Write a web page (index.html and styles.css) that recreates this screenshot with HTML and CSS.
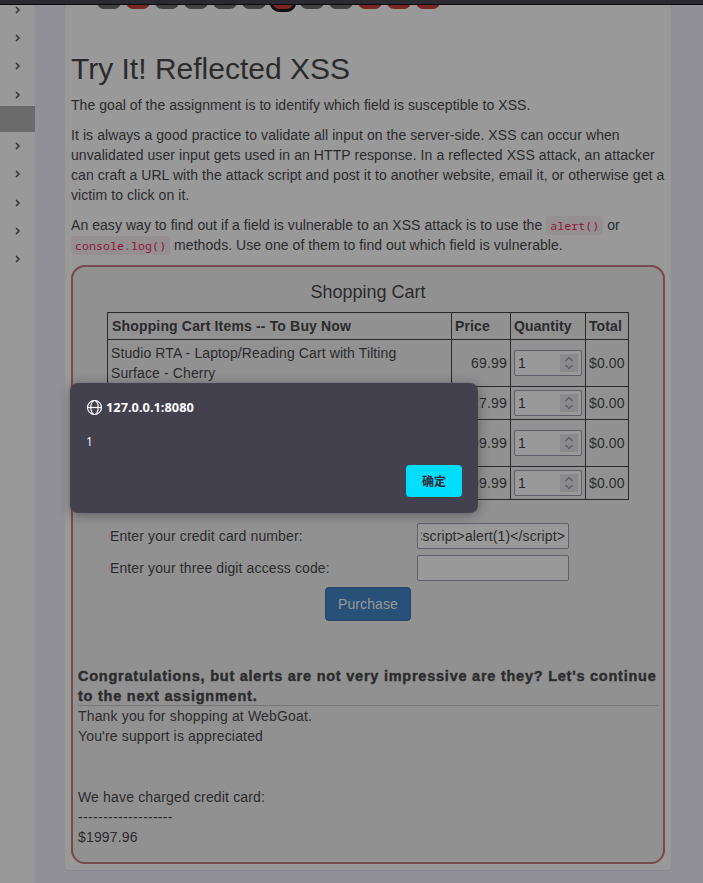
FILE: index.html
```html
<!DOCTYPE html>
<html lang="en">
<head>
<meta charset="utf-8">
<title>WebGoat</title>
<link rel="stylesheet" href="styles.css">
</head>
<body>
<svg width="0" height="0" class="defs">
  <symbol id="chev" viewBox="0 0 6 8"><path d="M1 1l3 3-3 3" fill="none" stroke="#33333d" stroke-width="1.5"/></symbol>
  <symbol id="spin" viewBox="0 0 18 18"><path d="M5.500 7L9 3.500l3.500 3.500M5.500 11L9 14.500l3.500-3.500" fill="none" stroke="#5e5d68" stroke-width="1.500"/></symbol>
</svg>
<div class="topbar"></div>
<div class="layout">
  <nav class="sidebar">
    <div class="item"><svg><use href="#chev"/></svg></div>
    <div class="item"><svg><use href="#chev"/></svg></div>
    <div class="item"><svg><use href="#chev"/></svg></div>
    <div class="item"><svg><use href="#chev"/></svg></div>
    <div class="item selected"></div>
    <div class="item"><svg><use href="#chev"/></svg></div>
    <div class="item"><svg><use href="#chev"/></svg></div>
    <div class="item"><svg><use href="#chev"/></svg></div>
    <div class="item"><svg><use href="#chev"/></svg></div>
    <div class="item"><svg><use href="#chev"/></svg></div>
  </nav>
  <main class="card">
    <div class="pages"><i></i><i class="red"></i><i></i><i></i><i></i><i></i><i class="red current"></i><i></i><i></i><i class="red"></i><i class="red"></i><i class="red"></i></div>
    <h1>Try It! Reflected XSS</h1>
    <p>The goal of the assignment is to identify which field is susceptible to XSS.</p>
    <p class="about">It is always a good practice to validate all input on the server-side. XSS can occur when<br>unvalidated user input gets used in an HTTP response. In a reflected XSS attack, an attacker<br>can craft a URL with the attack script and post it to another website, email it, or otherwise get a<br>victim to click on it.</p>
    <p>An easy way to find out if a field is vulnerable to an XSS attack is to use the <code>alert()</code> or<br><code>console.log()</code> methods. Use one of them to find out which field is vulnerable.</p>
    <section class="attack">
      <h4>Shopping Cart</h4>
      <table class="cart">
        <colgroup><col class="c1"><col class="c2"><col class="c3"><col class="c4"></colgroup>
        <tr class="head"><th>Shopping Cart Items -- To Buy Now</th><th>Price</th><th>Quantity</th><th>Total</th></tr>
        <tr class="tall"><td>Studio RTA - Laptop/Reading Cart with Tilting<br>Surface - Cherry</td><td class="num">69.99</td><td><div class="qty">1<svg><use href="#spin"/></svg></div></td><td>$0.00</td></tr>
        <tr class="short"><td></td><td class="num">27.99</td><td><div class="qty">1<svg><use href="#spin"/></svg></div></td><td>$0.00</td></tr>
        <tr class="tall"><td></td><td class="num">1599.99</td><td><div class="qty">1<svg><use href="#spin"/></svg></div></td><td>$0.00</td></tr>
        <tr class="short"><td></td><td class="num">299.99</td><td><div class="qty">1<svg><use href="#spin"/></svg></div></td><td>$0.00</td></tr>
      </table>
      <div class="form">
        <span>Enter your credit card number:</span><div class="field"><b>&lt;script&gt;alert(1)&lt;/script&gt;</b></div>
        <span>Enter your three digit access code:</span><div class="field"></div>
      </div>
      <button class="buy">Purchase</button>
      <div class="feedback">Congratulations, but alerts are not very impressive are they? Let's continue<br>to the next assignment.</div>
      <div class="output">Thank you for shopping at WebGoat.<br>You're support is appreciated</div>
      <div class="output charged">We have charged credit card:<br><span class="rule">-------------------</span><br>$1997.96</div>
    </section>
  </main>
</div>
<div class="dialog">
  <div class="origin"><svg viewBox="0 0 16 16" width="16" height="16" fill="none" stroke="#fbfbfe" stroke-width="1.200"><circle cx="8.500" cy="7.500" r="7"/><ellipse cx="8.500" cy="7.500" rx="3.700" ry="7"/><path d="M1.500 7.500h14"/></svg><span>127.0.0.1:8080</span></div>
  <div class="message">1</div>
  <button class="ok">确定</button>
</div>
</body>
</html>
```
FILE: styles.css
```css
* { box-sizing: border-box; }
body { margin: 0; height: 883px; overflow: hidden; background: #919096; color: #2b2b2c; font: 14px/20px "Liberation Sans", Arial, sans-serif; }
.defs { position: absolute; }
.topbar { height: 5px; background: #2b2a33; border-bottom: 1px solid #0c0c0d; }
.layout { display: flex; height: 878px; overflow: hidden; }
.sidebar { width: 35px; background: #99999a; overflow: hidden; }
.item { height: 28.2px; display: flex; align-items: center; padding-left: 14.5px; }
.item:first-child { margin-top: -9px; }
.item svg { width: 6px; height: 8px; }
.item.selected { height: 26px; margin-top: -2.600px; background: #6b6b6c; }
.card { width: 606px; height: 865px; margin-left: 30px; padding: 0 6px; background: #99999a; border-radius: 0 0 4px 4px; box-shadow: 0 1px 1px #8b8a90; }
.pages { display: flex; gap: 5px; height: 7px; margin: 0 0 40px 25.500px; overflow: hidden; }
.pages i { width: 24px; height: 24px; margin-top: -20px; border-radius: 7px; background: #414142; flex: none; }
.pages .red { background: #792626; }
.pages .current { width: 26px; height: 29px; margin: -22px -1px 0; border: 3px solid #0d0d0e; border-radius: 9px; }
h1 { margin: 0 0 10px; font-size: 30px; line-height: 33px; font-weight: 400; white-space: nowrap; }
p { margin: 0 0 10px; white-space: nowrap; letter-spacing: 0.055px; }
.about { letter-spacing: 0.08px; }
code { font-family: "Noto Sans Mono", "DejaVu Sans Mono", monospace; font-size: 11.6px; line-height: 18px; color: #8b173b; background: #958f91; padding: 2px 4px; border-radius: 4px; }
.attack { width: 594px; height: 599px; border: 2px solid #794a4d; border-radius: 14px; background: #919192; padding: 15px 5px 0; }
h4 { margin: 0 0 10px; font-size: 18px; line-height: 20px; font-weight: 400; text-align: center; }
.cart { width: 522px; margin-left: 29px; border-collapse: collapse; table-layout: fixed; letter-spacing: 0.11px; }
.c1 { width: 344px; } .c2 { width: 59px; } .c3 { width: 75px; } .c4 { width: 43px; }
.cart th, .cart td { border: 1px solid #29292a; padding: 0 3px; text-align: left; white-space: nowrap; overflow: hidden; }
.cart th:first-child { padding-left: 4px; letter-spacing: 0.16px; }
.cart .num { text-align: right; letter-spacing: 0.2px; }
.head { height: 27px; } .tall { height: 47px; } .short { height: 33px; }
.qty { width: 68px; height: 26px; border: 1px solid #5e5d68; border-radius: 2px; background: #99999a; display: flex; align-items: center; justify-content: space-between; padding: 0 3px; }
.qty svg { width: 18px; height: 18px; background: #8b8b8f; }
.form { display: grid; grid-template-columns: 307px 152px; row-gap: 6px; margin: 23px 0 0 32px; align-items: center; letter-spacing: 0.12px; }
.field { height: 26px; border: 1px solid #5e5d68; border-radius: 2px; background: #99999a; padding: 0 3px; display: flex; justify-content: flex-end; align-items: center; }
.field b { font-weight: 400; overflow: hidden; display: flex; justify-content: flex-end; width: 100%; white-space: nowrap; }
.buy { display: block; width: 86px; height: 34px; margin: 6px 0 0 247px; padding: 0; font: inherit; letter-spacing: 0.1px; color: #99999a; background: #285078; border: 1px solid #234568; border-radius: 4px; }
.feedback { height: 40px; margin-top: 45px; border-bottom: 1px solid #777778; font-weight: 700; font-size: 14.5px; -webkit-text-stroke: 0.4px #2b2b2c; letter-spacing: 0.76px; white-space: nowrap; }
.output { letter-spacing: 0.16px; }
.rule { letter-spacing: 0.33px; }
.charged { margin-top: 41px; }
.dialog { position: absolute; left: 70px; top: 383px; width: 408px; height: 130px; border-radius: 8px; background: #42414d; color: #fbfbfe; box-shadow: 0 2px 12px rgba(20, 20, 25, .4); padding: 16px; display: flex; flex-direction: column; font: 12px/17px "Open Sans", "Noto Sans CJK SC", sans-serif; }
.origin { display: flex; gap: 4px; align-items: center; font-weight: 700; font-size: 12.8px; height: 17px; }
.message { margin-top: 17px; }
.ok { margin: auto 0 0 auto; width: 56px; height: 32px; border: 0; border-radius: 4px; background: #00ddff; color: #2b2a33; font: 700 12px/17px "Noto Sans CJK SC", sans-serif; padding: 0 0 2px; }
```
